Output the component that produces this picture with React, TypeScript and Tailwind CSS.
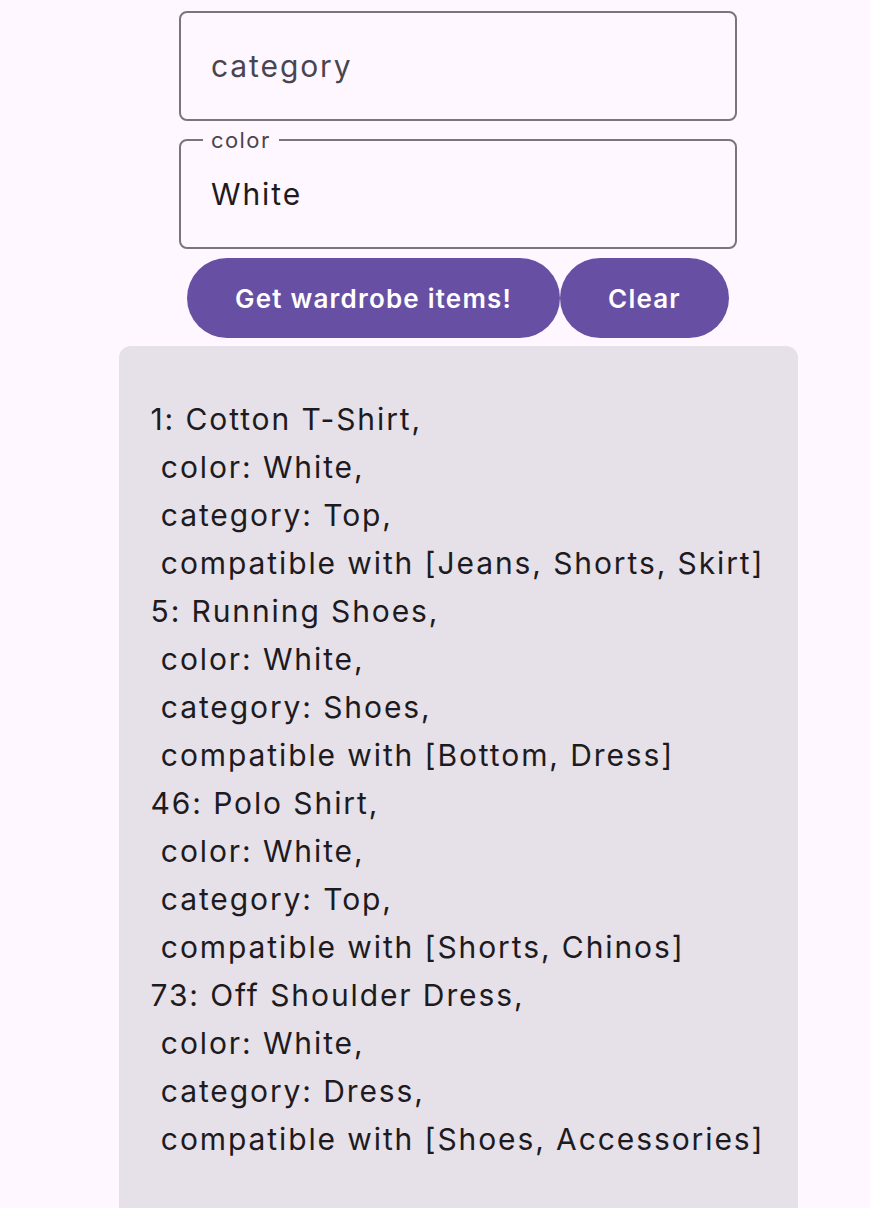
import React from "react";

const lines = [
  "1: Cotton T-Shirt,",
  " color: White,",
  " category: Top,",
  " compatible with [Jeans, Shorts, Skirt]",
  "5: Running Shoes,",
  " color: White,",
  " category: Shoes,",
  " compatible with [Bottom, Dress]",
  "46: Polo Shirt,",
  " color: White,",
  " category: Top,",
  " compatible with [Shorts, Chinos]",
  "73: Off Shoulder Dress,",
  " color: White,",
  " category: Dress,",
  " compatible with [Shoes, Accessories]",
];

export default function App() {
  return (
    <div
      className="w-[870px] h-[1208px] overflow-hidden bg-[#fef7ff] pl-[46px]"
      style={{ fontFamily: "Inter, Roboto, 'Noto Sans', sans-serif" }}
    >
      <div className="flex flex-col items-center">
        <div className="mt-[11px] w-[558px] h-[110px] rounded-[8px] border-2 border-[#79747e] flex items-center pl-[30px]">
          <span className="text-[30px] leading-[48px] tracking-[1.9px] text-[#49454f]">category</span>
        </div>
        <div className="relative mt-[18px] w-[558px] h-[110px] rounded-[8px] border-2 border-[#79747e] flex items-center pl-[30px]">
          <span className="absolute left-[22px] top-[-16px] bg-[#fef7ff] px-[8px] text-[22px] leading-[30px] tracking-[1.4px] text-[#49454f]">
            color
          </span>
          <span className="text-[30px] leading-[48px] tracking-[1.9px] text-[#1d1b20]">White</span>
        </div>
        <div className="mt-[9px] flex">
          <button className="h-[80px] rounded-full bg-[#6750a4] px-[48px] text-[26px] font-semibold tracking-[1.2px] text-white">
            Get wardrobe items!
          </button>
          <button className="h-[80px] rounded-full bg-[#6750a4] px-[48px] text-[26px] font-semibold tracking-[1.2px] text-white">
            Clear
          </button>
        </div>
        <div className="mt-[8px] w-[679px] h-[900px] rounded-[12px] bg-[#e6e0e9] pt-[49px] px-[32px]">
          {lines.map((l, i) => (
            <div key={i} className="whitespace-pre text-[30px] leading-[48px] tracking-[1.9px] text-[#1d1b20]">
              {l}
            </div>
          ))}
        </div>
      </div>
    </div>
  );
}
